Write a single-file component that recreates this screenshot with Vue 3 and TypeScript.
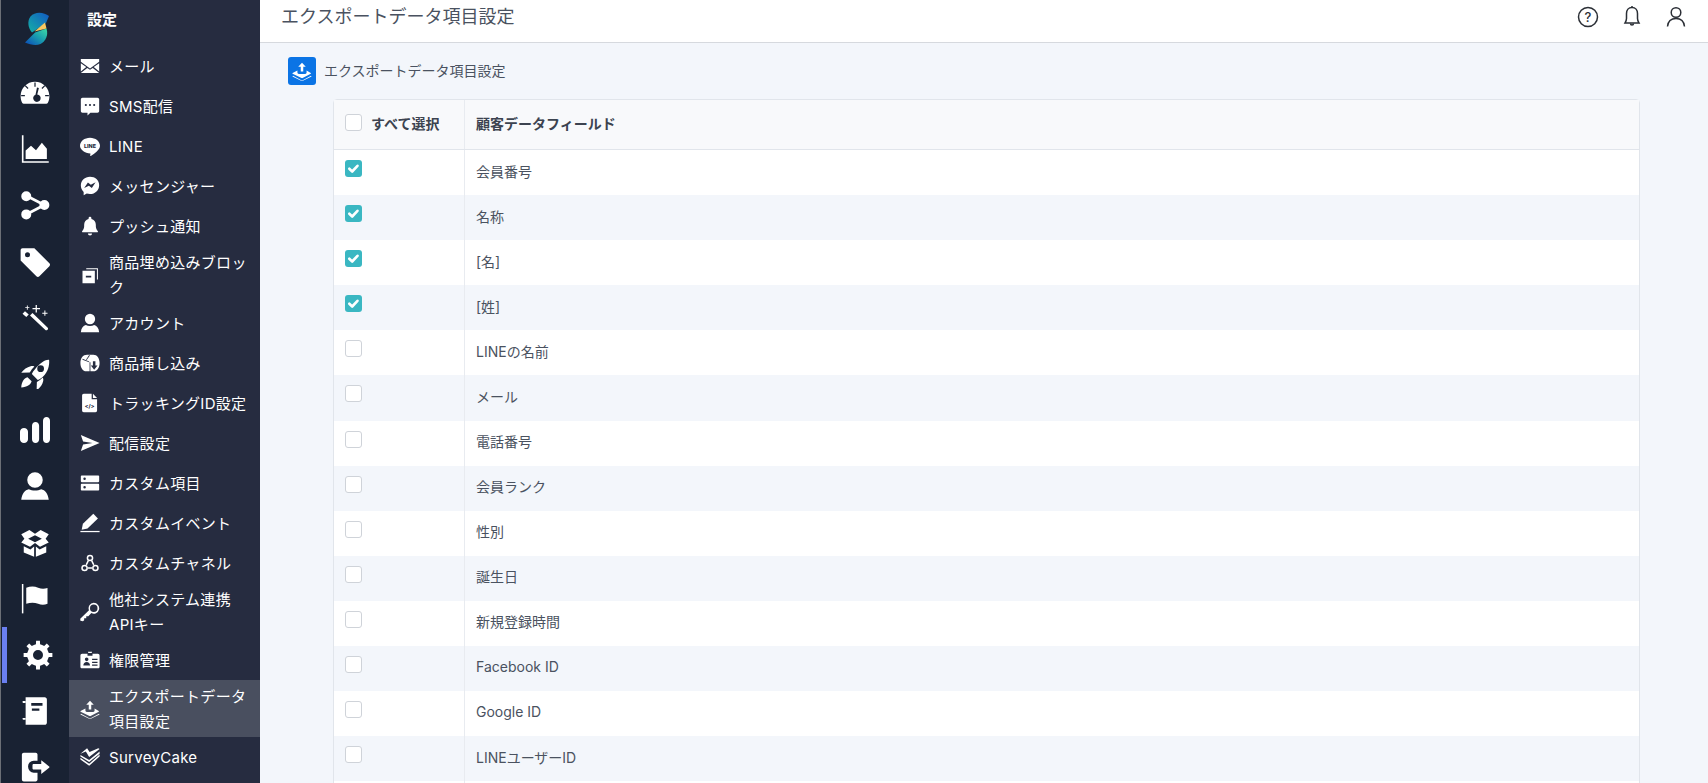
<script setup lang="ts">
type NavItem = { label: string; icon: string; active?: boolean }

// gear drawn from its teeth, easier than writing the path by hand
function gearPath(): string {
  const cx = 12, cy = 12, teeth = 8
  const pts: string[] = []
  for (let i = 0; i < teeth; i++) {
    const a = (i / teeth) * Math.PI * 2
    const step = (Math.PI * 2) / teeth
    const corners: [number, number][] = [
      [8.6, a - step * 0.5], [8.8, a - step * 0.24], [11.6, a - step * 0.17],
      [11.6, a + step * 0.17], [8.8, a + step * 0.24],
    ]
    for (const [r, t] of corners) {
      pts.push(`${(cx + r * Math.sin(t)).toFixed(2)} ${(cy - r * Math.cos(t)).toFixed(2)}`)
    }
  }
  return `M${pts.join('L')}zM12 8a4 4 0 1 0 0 8 4 4 0 0 0 0-8z`
}

const exportIcon = [
  'M12 2l4.500 5h-3v5.500h-3V7h-3z',
  'M6.500 11.500v2.300c0 .9.7 1.700 1.700 1.700h7.600c1 0 1.700-.8 1.700-1.700v-2.300l5 2.800c.4.300.4.800 0 1l-9.800 5.200c-.4.200-.9.200-1.300 0L.7 15.300c-.4-.2-.4-.7 0-1z',
  'M1.200 17.800l10 5.200c.5.300 1.100.3 1.600 0l10-5.200.7.700-10.500 5.300h-2L.5 18.500z',
]

const icons: Record<string, string[]> = {
  gauge: ['M12 3C5.600 3 .5 8.100 .5 14.500c0 1.900.4 3.600 1.200 5.200.3.500.7.800 1.300.8h18c.6 0 1-.3 1.300-.8.800-1.600 1.200-3.300 1.200-5.200C23.500 8.100 18.400 3 12 3zM11.500 3.500h1V7h-1zM.9 13.500h3v1h-3zM20.100 13.500h3v1h-3zM3.800 6.400l.7-.7 2.300 2.300-.7.7zM17.200 8l2.300-2.300.7.7-2.300 2.300zM13.600 7.500l1.500.4-1.300 5.200a3 3 0 1 1-2.600 1.100 3 3 0 0 1 1.200-.9z'],
  chart: ['M1.500 1h1.300v20.700H23V23H1.500z', 'M4.500 20v-6.800l4.300-3.800 4 3.500 4.700-5.900 4 4.700V20z'],
  share: ['M5 1a4 4 0 1 1 0 8 4 4 0 0 1 0-8zM19.500 8a4 4 0 1 1 0 8 4 4 0 0 1 0-8zM5 15.500a4 4 0 1 1 0 8 4 4 0 0 1 0-8z', 'M6 3.800l14 7.200-1 2L5 5.800z', 'M19 11l1 2-14.200 7.400-1-2z'],
  tag: ['M.5 2.500C.5 1.700 1.200 1 2 1h9.500l12 12c.7.7.7 1.700 0 2.400l-8 8c-.7.7-1.700.7-2.400 0L.5 10.800zM6 4.200a2 2 0 1 0 0 4 2 2 0 0 0 0-4z'],
  wand: ['M2 8.500L4 6.500l3 2.700-2 2zM8 10l2-2 12 11.500c.6.600.6 1.300 0 1.900-.6.600-1.300.6-1.900 0z', 'M12.500 1.500h1v2.500H16v1h-2.500v2.500h-1V5H10V4h2.500zM19.500 6h.8v1.700H22v.8h-1.700v1.700h-.8V8.500h-1.700v-.8h1.700zM5.500 2h.7v1.300h1.300V4H6.200v1.300h-.7V4H4.200v-.7h1.300z'],
  rocket: ['M23.300.7c.4 4.500-1 9.500-4.800 13.300-.7.700-1.500 1.300-2.300 1.800-.6.400-1.300.7-2 1L9.500 12c.3-.7.600-1.400 1-2 .5-.8 1.100-1.600 1.800-2.300C15.500 4.500 19 .5 23.300.7zM16.500 5a2.700 2.700 0 1 0 0 5.400 2.700 2.700 0 0 0 0-5.400z', 'M8.500 5.800c1.100-.3 2-.2 3 .2-1.400 1.400-2.700 3-3.700 4.800L1 11c2-2.800 4.600-4.500 7.500-5.200zM13.500 18.300c1.600-.8 3.300-2 4.700-3.500.5 1 .6 2 .3 3-.7 2.800-2.400 5.300-5.200 7.200z', 'M6 14.500l3.300 3.300c-.8 2.800-3.700 4.700-8.300 5 .3-4.500 2-7.400 5-8.300z'],
  bars: ['M3.200 10.400c1.700 0 3.200 1.300 3.200 3v6c0 1.700-1.500 3-3.200 3S0 21.100 0 19.400v-6c0-1.700 1.500-3 3.200-3zM12.400 5.600c1.600 0 2.900 1.300 2.900 3v10.800c0 1.700-1.300 3-2.900 3s-2.800-1.300-2.800-3V8.600c0-1.700 1.200-3 2.800-3zM21.200 1.600c1.600 0 2.800 1.300 2.800 3v14.800c0 1.700-1.200 3-2.800 3s-2.800-1.300-2.800-3V4.600c0-1.700 1.200-3 2.800-3z'],
  user: ['M12 1a6.200 6.200 0 1 1 0 12.400A6.200 6.200 0 0 1 12 1zM7 14.500c1.500.7 3 1 5 1s3.500-.3 5-1c3 .6 5.500 3.500 6 8.500H1c.5-5 3-7.900 6-8.500z'],
  box: ['M7.500 1.500l4.500 3 4.500-3 6.500 3.500-2.500 3.500 2.500 3-7 3.500-4-3-4 3-7-3.500 2.500-3L1 5zM12 5.800L6.500 8.500 12 11.300l5.500-2.800z', 'M3 14.500l5.300 2.600 3-2.300V23l-8.300-3.500zM21 14.500v5L12.700 23v-8.200l3 2.300z'],
  flag: ['M1.500 0h1.200v23.500H1.500z', 'M5 3c3.500-1.300 6.500-1.300 9.500 0 2.700 1 5 .9 7.500.2v12.600c-2.500 1-5 1-7.500 0-3-1.200-6-1.200-9.500 0z'],
  gear: [gearPath()],
  book: ['M4.500 1h15.300c.9 0 1.700.8 1.700 1.700v18.600c0 .9-.8 1.700-1.700 1.700H4.500zM9 5.500v2.300h9V5.500zM9.500 10v1.700h6V10z', 'M2.500 4h2v1.500h-2a.8.8 0 0 1 0-1.500zM2.500 17.500h2V19h-2a.8.8 0 0 1 0-1.500z'],
  exit: ['M3 .5h9.500c.9 0 1.500.7 1.500 1.500v5h-3a4.500 4.500 0 0 0-4.500 5 4.500 4.500 0 0 0 4.500 4.500h3V22c0 .9-.6 1.500-1.500 1.500H3A1.500 1.500 0 0 1 1.500 22V2C1.500 1.200 2.200.5 3 .5z', 'M17 6.500l6.300 5c.4.300.4.800 0 1l-6.300 5v-3.500H11c-.6 0-1-.4-1-1v-2.500c0-.6.4-1 1-1h6z'],
  mail: ['M1 3.500h22V7l-11 8L1 7z', 'M1 8.800l6.500 4.500L1 18.500zM23 8.800v9.700l-6.500-5.200z', 'M8.700 14.300l3.300 2.300 3.300-2.300 7.700 6v.2H1v-.2z'],
  sms: ['M3 2h18c1.100 0 2 .9 2 2v14c0 1.100-.9 2-2 2h-8.500l-3.500 3.500V20H3c-1.100 0-2-.9-2-2V4c0-1.100.9-2 2-2zM7 9.500a1.300 1.300 0 1 0 0 2.600 1.300 1.300 0 0 0 0-2.600zM12 9.500a1.300 1.300 0 1 0 0 2.600 1.300 1.300 0 0 0 0-2.600zM17 9.500a1.300 1.300 0 1 0 0 2.600 1.300 1.300 0 0 0 0-2.600z'],
  line: ['M12 2c6.600 0 12 4.300 12 9.700 0 4.700-6.500 9.300-11 12.300-.5.200-.8 0-.7-.5l.2-2.500C5.700 20.500 0 16.500 0 11.700 0 6.300 5.400 2 12 2z'],
  messenger: ['M12 1C5.800 1 1 5.500 1 11.500c0 3.100 1.300 5.800 3.400 7.700V23l3.700-2c1.200.4 2.500.6 3.900.6 6.200 0 11-4.600 11-10.600S18.200 1 12 1zM5 14.500l4.500-6.700 3.500 2.700 5.700-3-4.500 6.800-3.600-2.700z'],
  bell: ['M12 1a1.700 1.700 0 0 1 1.700 1.700v.9c3.200.8 5.300 3.500 5.300 7v1.700c0 2.300.9 4.200 2.300 5.700.6.700.2 1.500-.6 1.500H3.300c-.8 0-1.200-.8-.6-1.500C4.100 16.500 5 14.600 5 12.300v-1.700c0-3.500 2.100-6.200 5.300-7v-.9A1.700 1.700 0 0 1 12 1z', 'M9.500 21h5a2.500 2.500 0 0 1-5 0z'],
  blocks: ['M7.500 4h14v13.500h-1.200V5.200H7.500z', 'M3 7h14.800v15H3zM7 13v2h6.500v-2z'],
  parcel: ['M8.500 2h7.500c4.500 0 7.500 4 7.500 10s-3 10-7.500 10H7.500C3.500 22 .5 18 .5 12S3.500 2 8.500 2zM3 7l8 3.300v.8L3 8zM11 2.500l-3.800 5.500.8.400 3.900-5.500zM11.500 11h1v11h-1zM15.500 10h3v5h2.500l-4 5-4-5h2.500z'],
  code: ['M4.500 1h9.500v6.500h6.500V21c0 1.100-.9 2-2 2H4.500c-1.100 0-2-.9-2-2V3c0-1.100.9-2 2-2z', 'M15.500 1l5 5h-5z'],
  send: ['M1 2.500l22.500 9.500L1 21.500l2.700-7.800L15 12 3.700 10.300z'],
  server: ['M2 3h20c.6 0 1 .4 1 1v6c0 .6-.4 1-1 1H2c-.6 0-1-.4-1-1V4c0-.6.4-1 1-1zM5.500 5.500a1.500 1.500 0 1 0 0 3 1.500 1.500 0 0 0 0-3z', 'M2 13h20c.6 0 1 .4 1 1v6c0 .6-.4 1-1 1H2c-.6 0-1-.4-1-1v-6c0-.6.4-1 1-1zM5.500 15.500a1.500 1.500 0 1 0 0 3 1.500 1.500 0 0 0 0-3z'],
  pen: ['M16 1l5.500 5.500L9 18.500l-7 1.500 1.500-7z', 'M.5 21.500h23v1.500H.5z'],
  hook: [
    'M12 2a4 4 0 1 1 0 8 4 4 0 0 1 0-8zM12 3.800a2.200 2.200 0 1 0 0 4.400 2.200 2.200 0 0 0 0-4.400z',
    'M5.500 14a4 4 0 1 1 0 8 4 4 0 0 1 0-8zM5.500 15.800a2.200 2.200 0 1 0 0 4.400 2.200 2.200 0 0 0 0-4.400z',
    'M18.500 14a4 4 0 1 1 0 8 4 4 0 0 1 0-8zM18.500 15.800a2.200 2.200 0 1 0 0 4.400 2.200 2.200 0 0 0 0-4.400z',
    'M9.200 8.800l1.600.9-2.500 5-1.600-.9zM13.200 9.700l1.600-.9 2.500 5-1.600.9zM9.500 17.100h5v1.800h-5z',
  ],
  key: ['M16.500 1a6.500 6.500 0 1 1-2.900 12.300L10 17h-2.500v2.500H5V22l-1.500 1.200-3-.7-.2-2.500 10.500-10A6.500 6.500 0 0 1 16.500 1zM16.500 3a4.500 4.500 0 1 0 0 9 4.500 4.500 0 0 0 0-9z'],
  idcard: ['M10 3.500h4l.5-1.500h-5zM2.500 4.500H9V7h6V4.500h6.500c1.100 0 2 .9 2 2V20c0 1.100-.9 2-2 2h-19c-1.100 0-2-.9-2-2V6.500c0-1.100.9-2 2-2zM8 9a2.200 2.200 0 1 0 0 4.400A2.200 2.200 0 0 0 8 9zM4 18.500h8c0-2.500-1.700-4-4-4s-4 1.500-4 4zM14.500 10.500V12H21v-1.500zM14.500 14V15.500H21V14zM14.500 17.500V19H21v-1.500z'],
  export: exportIcon,
  cake: ['M8.500 1.500l3 4.500L22 1.500l1.500 1L11 12 7 5.500 .5 8z', 'M.5 9.500l10.500 6L23.500 5.500v2.500L11 18 .5 11.500z', 'M.5 13l10.500 7 12.500-11v2.500L11 22.500.5 15z'],
}

const rail = ['gauge', 'chart', 'share', 'tag', 'wand', 'rocket', 'bars', 'user', 'box', 'flag', 'gear', 'book', 'exit']

const navItems: NavItem[] = [
  { label: 'メール', icon: 'mail' },
  { label: 'SMS配信', icon: 'sms' },
  { label: 'LINE', icon: 'line' },
  { label: 'メッセンジャー', icon: 'messenger' },
  { label: 'プッシュ通知', icon: 'bell' },
  { label: '商品埋め込みブロック', icon: 'blocks' },
  { label: 'アカウント', icon: 'user' },
  { label: '商品挿し込み', icon: 'parcel' },
  { label: 'トラッキングID設定', icon: 'code' },
  { label: '配信設定', icon: 'send' },
  { label: 'カスタム項目', icon: 'server' },
  { label: 'カスタムイベント', icon: 'pen' },
  { label: 'カスタムチャネル', icon: 'hook' },
  { label: '他社システム連携APIキー', icon: 'key' },
  { label: '権限管理', icon: 'idcard' },
  { label: 'エクスポートデータ項目設定', icon: 'export', active: true },
  { label: 'SurveyCake', icon: 'cake' },
]

const fields = [
  { name: '会員番号', on: true },
  { name: '名称', on: true },
  { name: '[名]', on: true },
  { name: '[姓]', on: true },
  { name: 'LINEの名前', on: false },
  { name: 'メール', on: false },
  { name: '電話番号', on: false },
  { name: '会員ランク', on: false },
  { name: '性別', on: false },
  { name: '誕生日', on: false },
  { name: '新規登録時間', on: false },
  { name: 'Facebook ID', on: false },
  { name: 'Google ID', on: false },
  { name: 'LINEユーザーID', on: false },
  { name: '', on: false },
]
</script>

<template>
  <div class="app">
    <aside class="rail">
      <div class="logo">
        <svg width="30" height="40" viewBox="0 0 30 40">
          <defs>
            <linearGradient id="lgTop" x1="1" y1="0" x2="0" y2="1">
              <stop offset="0" stop-color="#1259c3" />
              <stop offset="1" stop-color="#14b0a6" />
            </linearGradient>
            <linearGradient id="lgBot" x1="0" y1="1" x2="1" y2="0">
              <stop offset="0" stop-color="#0a47b8" />
              <stop offset="0.55" stop-color="#1a9fae" />
              <stop offset="1" stop-color="#3fdca6" />
            </linearGradient>
          </defs>
          <path d="M26 6C21 2 12 1 7.500 6.500 4 11 5 18 9 22.500L23 13z" fill="url(#lgTop)" />
          <path d="M23.500 18.500C25.500 25 23 31 17.500 34 12.500 36 7 34.500 2 32.500L12 22.500z" fill="url(#lgBot)" />
          <path d="M22 12.500L11.500 21.500 23.500 18.500z" fill="#f7c860" />
        </svg>
      </div>
      <div v-for="name in rail" :key="name" class="rail-item" :class="{ on: name === 'gear' }">
        <svg width="30" height="30" viewBox="0 0 24 24" fill="#fff">
          <path v-for="d in icons[name]" :key="d" :d="d" fill-rule="evenodd" />
        </svg>
      </div>
    </aside>

    <nav class="side">
      <div class="side-title">設定</div>
      <div v-for="item in navItems" :key="item.label" class="side-item" :class="{ active: item.active }">
        <svg class="side-icon" width="20" height="20" viewBox="0 0 24 24" fill="#fff">
          <path v-for="d in icons[item.icon]" :key="d" :d="d" fill-rule="evenodd" />
          <text v-if="item.icon === 'line'" x="12" y="14" class="tiny" text-anchor="middle">LINE</text>
          <text v-if="item.icon === 'code'" x="11.500" y="18" class="tiny" text-anchor="middle">&lt;/&gt;</text>
        </svg>
        <span class="side-label">{{ item.label }}</span>
      </div>
    </nav>

    <div class="main">
      <header class="top">
        <h1 class="top-title">エクスポートデータ項目設定</h1>
        <div class="top-icons">
          <svg width="24" height="24" viewBox="0 0 24 24" fill="none" stroke="#2b2f36" stroke-width="1.500">
            <circle cx="12" cy="12" r="9.500" />
            <text x="12" y="16.500" class="qm" text-anchor="middle">?</text>
          </svg>
          <svg width="24" height="24" viewBox="0 0 24 24" fill="none" stroke="#2b2f36" stroke-width="1.500">
            <path d="M12 2.500c-3.500 0-5.500 2.700-5.500 6v5c0 2-.8 3.300-1.500 4.500h14c-.7-1.200-1.500-2.500-1.500-4.500v-5c0-3.300-2-6-5.500-6z" />
            <path d="M10.500 18.500a1.500 1.500 0 0 0 3 0M12 1v1.500" />
          </svg>
          <svg width="24" height="24" viewBox="0 0 24 24" fill="none" stroke="#2b2f36" stroke-width="1.500">
            <circle cx="12" cy="7.500" r="4.800" />
            <path d="M3.500 21.500c.5-5 3.500-8 8.500-8s8 3 8.500 8" />
          </svg>
        </div>
      </header>

      <section class="content">
        <div class="sub">
          <span class="sub-icon">
            <svg width="20" height="20" viewBox="0 0 24 24" fill="#fff">
              <path v-for="d in exportIcon" :key="d" :d="d" fill-rule="evenodd" />
            </svg>
          </span>
          <span class="sub-title">エクスポートデータ項目設定</span>
        </div>

        <div class="table">
          <div class="row head">
            <div class="cell first">
              <span class="cb"></span>
              <span class="all">すべて選択</span>
            </div>
            <div class="cell">顧客データフィールド</div>
          </div>
          <div v-for="(f, i) in fields" :key="i" class="row" :class="{ odd: i % 2 === 1 }">
            <div class="cell first top-aligned">
              <span class="cb" :class="{ checked: f.on }">
                <svg v-if="f.on" width="17" height="17" viewBox="0 0 17 17" fill="none" stroke="#fff" stroke-width="2.600" stroke-linecap="round" stroke-linejoin="round">
                  <path d="M4.300 8.700l2.900 2.800 5.300-5.700" />
                </svg>
              </span>
            </div>
            <div class="cell">{{ f.name }}</div>
          </div>
        </div>
      </section>
    </div>
  </div>
</template>

<style>
html, body { margin: 0; height: 100%; overflow: hidden; }
</style>

<style scoped>
.app {
  display: flex;
  height: 100vh;
  overflow: hidden;
  font-family: Inter, "Noto Sans CJK JP", sans-serif;
  background: #f3f6fb;
}

.rail {
  width: 69px;
  flex: none;
  box-sizing: border-box;
  background: #192233;
  border-left: 1px solid #6b6f76;
  display: flex;
  flex-direction: column;
  align-items: stretch;
}
.logo { height: 65px; flex: none; display: flex; justify-content: center; padding: 10px 0 0 6px; box-sizing: border-box; }
.rail-item {
  height: 56.2px;
  flex: none;
  display: flex;
  align-items: center;
  justify-content: center;
  box-sizing: border-box;
}
.rail-item.on { box-shadow: inset 5px 0 0 #6a7ff0; border-left: 1px solid #192233; padding-left: 5px; }

.side {
  width: 191px;
  flex: none;
  background: #262c40;
  color: #fff;
}
.side-title {
  height: 46px;
  padding: 10px 0 0 18px;
  box-sizing: border-box;
  font-size: 15px;
  font-weight: 700;
  line-height: 20px;
}
.side-item {
  min-height: 40px;
  padding: 3.500px 11px 3.500px 11px;
  box-sizing: border-box;
  display: flex;
  align-items: center;
  gap: 9px;
  font-size: 15px;
  letter-spacing: .3px;
  line-height: 25px;
}
.side-item.active { background: #494f5f; }
.side-icon { flex: none; }
.tiny { font-size: 6.500px; font-weight: 800; fill: #262c40; font-family: Inter, sans-serif; letter-spacing: 0; }
.side-label { flex: 1; min-width: 0; }

.main { flex: 1; min-width: 0; display: flex; flex-direction: column; }
.top {
  height: 43px;
  flex: none;
  box-sizing: border-box;
  background: #fff;
  border-bottom: 1px solid #d6d9de;
  display: flex;
  align-items: center;
  justify-content: space-between;
  padding: 0 20px 8px 21px;
}
.top-title { margin: 0; font-size: 18px; font-weight: 400; color: #4a5260; line-height: 24px; }
.top-icons { display: flex; gap: 20px; }
.qm { font-size: 13px; font-weight: 500; fill: #2b2f36; stroke: none; font-family: Inter, sans-serif; }

.content { padding: 14px 68px 0 28px; }
.sub { display: flex; align-items: center; gap: 8px; height: 28px; }
.sub-title { font-size: 14px; color: #4a5260; padding-bottom: 2px; }
.sub-icon {
  width: 28px;
  height: 28px;
  border-radius: 3px;
  background: #0b74e5;
  display: flex;
  align-items: center;
  justify-content: center;
}

.table {
  margin: 14px 0 0 45px;
  border: 1px solid #e1e5eb;
  border-radius: 4px;
  background: #fff;
  color: #4a5260;
  font-size: 14px;
}
.row { display: grid; grid-template-columns: 131px 1fr; height: 45.1px; }
.row.odd { background: #f3f6fb; }
.row.head {
  height: 49px;
  background: #f8f9fb;
  border-bottom: 1px solid #e1e5eb;
  font-weight: 700;
  color: #3c4350;
}
.cell { display: flex; align-items: center; padding: 0 0 4px 11px; }
.cell.first { border-right: 1px solid #e8ebf0; gap: 9px; padding-left: 11px; }
.cell.top-aligned { align-items: flex-start; padding-top: 10px; }
.cb {
  width: 17px;
  height: 17px;
  box-sizing: border-box;
  border-radius: 3px;
  background: #fff;
  border: 1px solid #cfd3d9;
  display: block;
  flex: none;
}
.cb.checked { background: #3ab7c2; border: 0; }
.cb svg { display: block; }
</style>
